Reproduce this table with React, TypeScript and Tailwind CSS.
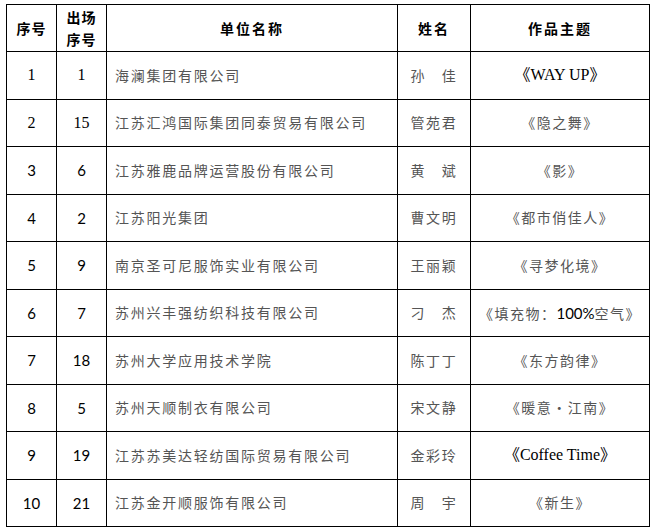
import React from 'react'

type Row = {
  no: string
  order: string
  unit: string
  name: string
  theme: React.ReactNode
  serifNum?: boolean
}

const cjk = "font-['Noto_Sans_CJK_SC',sans-serif]"
const serif = "font-['Liberation_Serif','Noto_Sans_CJK_SC',serif]"
const sansNum = "font-['Lato','Liberation_Sans',sans-serif]"

const rows: Row[] = [
  { no: '1', order: '1', unit: '海澜集团有限公司', name: '孙　佳', theme: <span className={`${serif} text-[16px] text-black tracking-normal`}>《WAY UP》</span>, serifNum: true },
  { no: '2', order: '15', unit: '江苏汇鸿国际集团同泰贸易有限公司', name: '管苑君', theme: '《隐之舞》', serifNum: true },
  { no: '3', order: '6', unit: '江苏雅鹿品牌运营股份有限公司', name: '黄　斌', theme: '《影》' },
  { no: '4', order: '2', unit: '江苏阳光集团', name: '曹文明', theme: '《都市俏佳人》' },
  { no: '5', order: '9', unit: '南京圣可尼服饰实业有限公司', name: '王丽颖', theme: '《寻梦化境》' },
  {
    no: '6', order: '7', unit: '苏州兴丰强纺织科技有限公司', name: '刁　杰',
    theme: (
      <>
        《填充物：<span className={`${sansNum} text-[15px] text-black tracking-normal`}>100%</span>空气》
      </>
    ),
  },
  { no: '7', order: '18', unit: '苏州大学应用技术学院', name: '陈丁丁', theme: '《东方韵律》' },
  { no: '8', order: '5', unit: '苏州天顺制衣有限公司', name: '宋文静', theme: '《暖意·江南》' },
  { no: '9', order: '19', unit: '江苏苏美达轻纺国际贸易有限公司', name: '金彩玲', theme: <span className={`${serif} text-[16px] text-black tracking-normal`}>《Coffee Time》</span> },
  { no: '10', order: '21', unit: '江苏金开顺服饰有限公司', name: '周　宇', theme: '《新生》' },
]

const cell = 'border border-black p-0 align-middle'

export default function App() {
  return (
    <div className="w-[653px] h-[531px] bg-white pt-[4px] pl-[6px]">
      <table className="border-collapse table-fixed w-[643px]">
        <colgroup>
          <col className="w-[50px]" />
          <col className="w-[50px]" />
          <col className="w-[291px]" />
          <col className="w-[73px]" />
          <col className="w-[179px]" />
        </colgroup>
        <thead>
          <tr className={`h-[47px] ${cjk} font-bold text-[14px] text-black`}>
            <th className={`${cell} text-center tracking-[1px]`}>序号</th>
            <th className={`${cell} text-center leading-[22px] tracking-[1px]`}>
              出场
              <br />
              序号
            </th>
            <th className={`${cell} text-center tracking-[2px]`}>单位名称</th>
            <th className={`${cell} text-center tracking-[2px]`}>姓名</th>
            <th className={`${cell} text-center tracking-[2px]`}>作品主题</th>
          </tr>
        </thead>
        <tbody>
          {rows.map((r) => (
            <tr key={r.no} className="h-[47.5px]">
              <td className={`${cell} text-center text-black ${r.serifNum ? `${serif} text-[16px]` : `${sansNum} text-[15px]`}`}>
                {r.no}
              </td>
              <td className={`${cell} text-center text-black ${r.serifNum ? `${serif} text-[16px]` : `${sansNum} text-[15px]`}`}>
                {r.order}
              </td>
              <td className={`${cell} pl-[8px] ${cjk} text-[14px] text-[#555] tracking-[1.75px] whitespace-nowrap`}>
                {r.unit}
              </td>
              <td className={`${cell} text-center ${cjk} text-[14px] text-[#555] tracking-[1.75px]`}>
                {r.name}
              </td>
              <td className={`${cell} text-center ${cjk} text-[14px] text-[#555] tracking-[1.5px] whitespace-nowrap`}>
                {r.theme}
              </td>
            </tr>
          ))}
        </tbody>
      </table>
    </div>
  )
}
